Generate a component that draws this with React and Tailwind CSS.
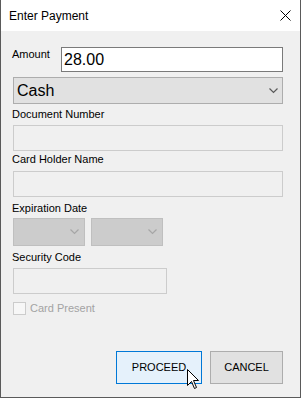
import React from "react";

function Chevron({ color = "#5a5a5a" }) {
  return (
    <svg width="9" height="6" viewBox="0 0 9 6" className="shrink-0">
      <polyline points="0.5,0.5 4.5,4.5 8.5,0.5" fill="none" stroke={color} strokeWidth="1.2" />
    </svg>
  );
}

function Label({ children, className = "" }) {
  return <div className={`h-[13px] leading-[13px] text-[11px] text-black pl-[11px] ${className}`}>{children}</div>;
}

export default function App() {
  return (
    <div className="w-[301px] h-[398px] flex flex-col font-['Liberation_Sans',Arial,sans-serif] border-x border-b border-[#5a5a5a] bg-[#f0f0f0]">
      <div className="h-[31px] bg-white flex items-center justify-between pl-[8px] pr-[9px] shrink-0">
        <span className="text-[12px] text-black">Enter Payment</span>
        <svg width="11" height="11" viewBox="0 0 11 11">
          <path d="M0.5 0.5 L10.5 10.5 M10.5 0.5 L0.5 10.5" stroke="#000" strokeWidth="1" />
        </svg>
      </div>

      <div className="flex-1 flex flex-col pt-[16px] pr-[17px] pb-[13px]">
        <div className="flex items-start h-[25px]">
          <div className="w-[60px] pl-[11px] pt-[1px] text-[11px] leading-[13px] text-black">Amount</div>
          <div className="flex-1 h-[25px] bg-white border border-[#7a7a7a] flex items-center pl-[2px] text-[16px] text-black">
            28.00
          </div>
        </div>

        <div className="mt-[5px] ml-[12px] h-[27px] bg-[#e1e1e1] border border-[#adadad] flex items-center justify-between pl-[3px] pr-[4px] text-[16px] text-black">
          <span>Cash</span>
          <Chevron />
        </div>

        <Label className="mt-[4px]">Document Number</Label>
        <div className="mt-[4px] ml-[12px] h-[26px] border border-[#cccccc] bg-[#f0f0f0]" />

        <Label className="mt-[2px]">Card Holder Name</Label>
        <div className="mt-[5px] ml-[12px] h-[26px] border border-[#cccccc] bg-[#f0f0f0]" />

        <Label className="mt-[5px]">Expiration Date</Label>
        <div className="mt-[3px] ml-[12px] flex gap-[6px]">
          <div className="w-[72px] h-[28px] bg-[#cccccc] border border-[#bfbfbf] flex items-center justify-end pr-[5px]">
            <Chevron color="#a6a6a6" />
          </div>
          <div className="w-[72px] h-[28px] bg-[#cccccc] border border-[#bfbfbf] flex items-center justify-end pr-[5px]">
            <Chevron color="#a6a6a6" />
          </div>
        </div>

        <Label className="mt-[5px]">Security Code</Label>
        <div className="mt-[4px] ml-[12px] w-[154px] h-[26px] border border-[#cccccc] bg-[#f0f0f0]" />

        <div className="mt-[8px] ml-[12px] flex items-center gap-[4px]">
          <div className="w-[13px] h-[13px] border border-[#cccccc] bg-[#f7f7f7]" />
          <span className="text-[11px] leading-[13px] text-[#a3a3a3]">Card Present</span>
        </div>

        <div className="mt-auto flex justify-end gap-[8px]">
          <div className="relative w-[86px] h-[33px] bg-[#e5f1fb] border border-[#0078d7] flex items-center justify-center text-[11px] text-black">
            PROCEED
            <svg width="13" height="21" viewBox="0 0 13 21" className="absolute left-[70px] top-[17px]">
              <path d="M0.5 0.5 L0.5 16.5 L4.5 12.5 L7.5 19.5 L9.5 18.5 L6.5 11.5 L11.5 11.5 Z" fill="#fff" stroke="#000" strokeWidth="1" strokeLinejoin="miter" />
            </svg>
          </div>
          <div className="w-[73px] h-[33px] bg-[#e1e1e1] border border-[#adadad] flex items-center justify-center text-[11px] text-black">
            CANCEL
          </div>
        </div>
      </div>
    </div>
  );
}
